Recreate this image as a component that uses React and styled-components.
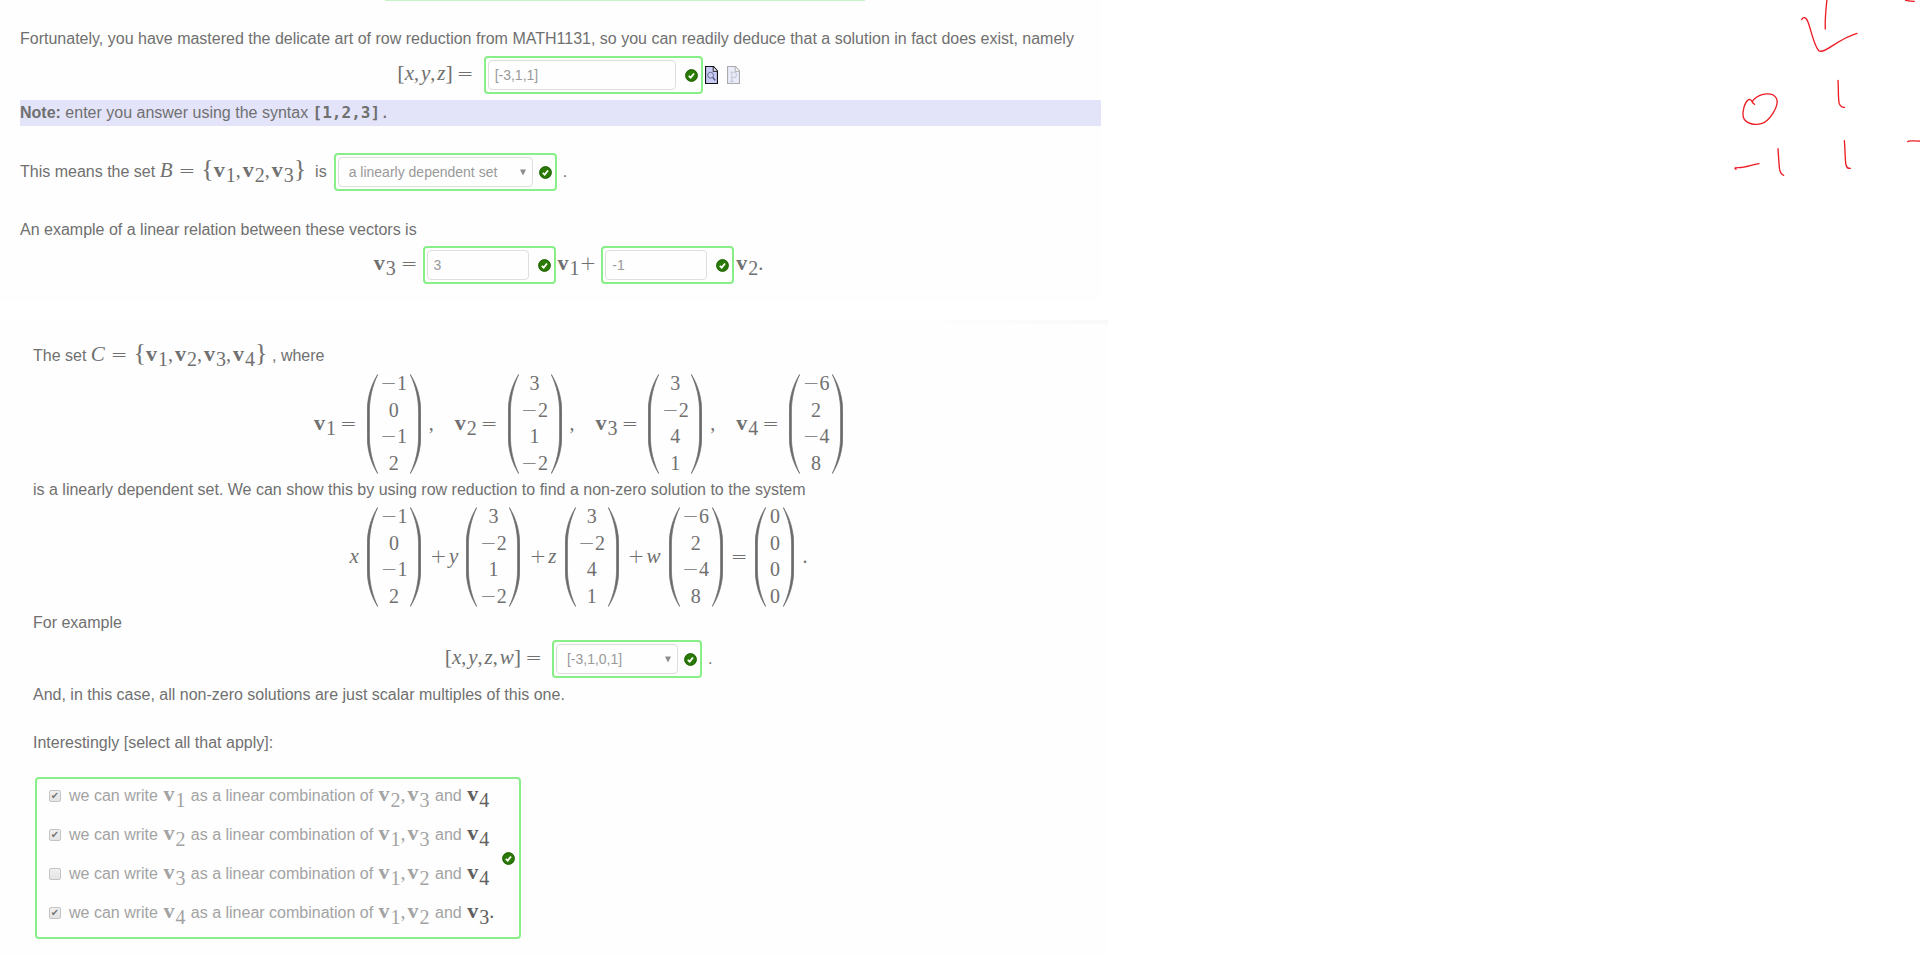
import React from "react";
import styled, { createGlobalStyle } from "styled-components";

const GlobalStyle = createGlobalStyle`
  * { box-sizing: border-box; }
  body {
    margin: 0;
    background: #fff;
    color: #707070;
    font: 16px/24px "Liberation Sans", Arial, sans-serif;
  }
`;

const Page = styled.div`
  display: flex;
  align-items: flex-start;
  justify-content: space-between;
`;

const Quiz = styled.main`
  flex: 0 1 1108px;
  min-width: 0;
`;

const PreviousAnswerEdge = styled.div`
  width: 480px;
  height: 1px;
  margin-left: 365px;
  background: #c4f5c4;
`;

const RelationPart = styled.section`
  margin-right: 7px;
  padding: 0 0 17px 20px;
  background: #fefefe;
`;

const SystemPart = styled.section`
  margin-top: 19px;
  padding: 22px 0 16px 33px;
  background: linear-gradient(to left, #f9f9f9, #fefefe 200px) 0 0 / 100% 4px no-repeat #fefefe;
`;

const Line = styled.p`
  display: flex;
  align-items: baseline;
  margin: ${(p) => p.$before || 0}px 0 0;
  white-space: pre;
`;

const MathText = styled.span`
  font: 20px/24px "Liberation Serif", "Times New Roman", serif;
  white-space: pre;
  margin: 0 ${(p) => p.$right || 0}px 0 ${(p) => p.$left || 0}px;
`;

const Equation = styled.div`
  display: flex;
  justify-content: center;
  align-items: ${(p) => (p.$tall ? "center" : "baseline")};
  margin-top: ${(p) => p.$before || 5}px;
  padding-left: 16px;
  ${MathText} {
    padding-bottom: ${(p) => (p.$tall ? 2 : 0)}px;
  }
`;

const Note = styled.p`
  margin: 6px 0 0;
  line-height: 26px;
  background: #e3e4f9;
`;

const Code = styled.code`
  font: 16px "DejaVu Sans Mono", monospace;
`;

const Variable = styled.i`
  font-size: 21px;
  line-height: 0;
`;

const Operator = styled.span`
  font: 200 20px/0 "DejaVu Sans Light", "DejaVu Sans", sans-serif;
  margin: 0 ${(p) => p.$sides}px;
`;

const Comma = styled.span`
  margin-right: 2px;
`;

const Fence = styled.span`
  font-size: ${(p) => p.$size || 22}px;
  line-height: 0;
`;

const VectorName = styled.b`
  margin-right: 1px;
  font-size: 22px;
  line-height: 0;
`;

const Index = styled.span`
  line-height: 0;
  vertical-align: ${(p) => (p.$low ? -6 : -5)}px;
`;

const Vector = ({ n, low }) => (
  <>
    <VectorName>v</VectorName>
    <Index $low={low}>{n}</Index>
  </>
);

const MatrixBox = styled.span`
  display: flex;
  height: 100px;
`;

const Entries = styled.span`
  display: flex;
  flex-direction: column;
  justify-content: space-between;
  align-items: center;
  width: ${(p) => (p.$narrow ? 17 : 32)}px;
  padding-bottom: 2px;
  font: 20px/18px "Liberation Serif", "Times New Roman", serif;
`;

const Entry = styled.span`
  white-space: nowrap;
`;

const Paren = ({ right }) => (
  <svg width="11" height="100" viewBox="0 0 11 100" aria-hidden="true">
    <path
      d={
        right
          ? "M0.3 0.5C7 11 10.8 24 10.8 38V62C10.8 76 7 89 0.3 99.5C5.6 88 8.6 76 8.6 62V38C8.6 24 5.6 12 0.3 0.5Z"
          : "M10.7 0.5C4 11 0.2 24 0.2 38V62C0.2 76 4 89 10.7 99.5C5.4 88 2.4 76 2.4 62V38C2.4 24 5.4 12 10.7 0.5Z"
      }
      fill="#6b6b6b"
      stroke="#6b6b6b"
      strokeWidth="0.7"
    />
  </svg>
);

const Matrix = ({ values }) => (
  <MatrixBox>
    <Paren />
    <Entries $narrow={values.every((v) => v === 0)}>
      {values.map((v, i) => (
        <Entry key={i}>
          {v < 0 && <Operator $sides={0}>−</Operator>}
          {Math.abs(v)}
        </Entry>
      ))}
    </Entries>
    <Paren right />
  </MatrixBox>
);

const AnswerBox = styled.span`
  display: flex;
  align-items: center;
  height: 38px;
  padding: 0 3px 0 2px;
  border: 2px solid #88ee88;
  border-radius: 4px;
  margin: 0 ${(p) => p.$right || 0}px 0 ${(p) => p.$left || 0}px;
`;

const TextAnswer = styled.input`
  width: ${(p) => p.$width}px;
  height: 30px;
  margin-right: 9px;
  padding: 0 6px;
  border: 1px solid #dedede;
  border-radius: 4px;
  background: #fefefe;
  color: #999;
  font: 14px "Liberation Sans", Arial, sans-serif;
`;

const SelectWrap = styled.span`
  display: grid;
  align-items: center;
  margin-right: 6px;
`;

const ChoiceAnswer = styled.select`
  grid-area: 1 / 1;
  width: ${(p) => p.$width}px;
  height: 30px;
  padding: 0 10px;
  border: 1px solid #dedede;
  border-radius: 4px;
  background: #fefefe;
  color: #999;
  opacity: 1;
  appearance: none;
  font: 14px "Liberation Sans", Arial, sans-serif;
`;

const Caret = styled.svg`
  grid-area: 1 / 1;
  justify-self: end;
  margin-right: 7px;
  pointer-events: none;
`;

const Choice = ({ label, value, width }) => (
  <SelectWrap>
    <ChoiceAnswer aria-label={label} $width={width} disabled defaultValue={value}>
      <option>{value}</option>
    </ChoiceAnswer>
    <Caret width="6" height="7" viewBox="0 0 6 7" aria-hidden="true">
      <path d="M0 0.5H6L3 6.5Z" fill="#8c8c8c" />
    </Caret>
  </SelectWrap>
);

const TickSvg = styled.svg`
  flex: none;
`;

const CorrectTick = () => (
  <TickSvg width="13" height="13" viewBox="0 0 13 13" role="img" aria-label="Correct">
    <circle cx="6.5" cy="6.5" r="6.2" fill="#2a7a06" />
    <circle cx="6.5" cy="6.5" r="5.8" fill="none" stroke="#1d5c04" strokeWidth="0.8" />
    <path d="M3.8 6.8L5.7 8.6L9 4.5" fill="none" stroke="#fff" strokeWidth="1.8" />
  </TickSvg>
);

const ToolButton = styled.button`
  display: flex;
  align-self: center;
  margin: 0 0 0 ${(p) => p.$left}px;
  padding: 0;
  border: 0;
  background: none;
  &:disabled { opacity: 0.35; }
`;

const PageOutline = ({ children }) => (
  <svg width="13" height="18" viewBox="0 0 13 18" aria-hidden="true">
    <path d="M0.5 0.5H8.5L12.5 5V17.5H0.5Z" fill="#c9cbf5" stroke="#111" strokeWidth="1.2" />
    <path d="M8.2 0.8V5.4H12.4" fill="#e8e8fb" stroke="#111" strokeWidth="0.9" />
    {children}
  </svg>
);

const Options = styled.fieldset`
  display: flex;
  align-items: center;
  width: 486px;
  margin: 22px 0 0 2px;
  padding: 0 4px 0 12px;
  border: 2px solid #88ee88;
  border-radius: 4px;
`;

const OptionList = styled.div`
  display: flex;
  flex-direction: column;
  gap: 15px;
  flex: 1;
  padding: 3px 0 14px;
`;

const Option = styled.label`
  display: flex;
  height: 24px;
  color: #a3a3a3;
  white-space: pre;
  align-items: baseline;
`;

const Tickbox = styled.input`
  appearance: none;
  align-self: center;
  flex: none;
  display: grid;
  place-items: center;
  width: 12px;
  height: 12px;
  margin: 3px 8px 0 0;
  border: 1px solid #c4c4c4;
  border-radius: 2px;
  background: linear-gradient(#f0f0f0, #e4e4e4);
  &:checked::after {
    content: "✔";
    color: #777;
    font: 10px/10px "DejaVu Sans", sans-serif;
  }
`;

const LastTerm = styled.span`
  color: #5f5f5f;
`;

const Scribble = styled.svg`
  flex: none;
`;

const Strokes = styled.g`
  fill: none;
  stroke: #ed1c24;
  stroke-width: 4;
  stroke-linecap: round;
  stroke-linejoin: round;
`;

const VECTORS = [
  [-1, 0, -1, 2],
  [3, -2, 1, -2],
  [3, -2, 4, 1],
  [-6, 2, -4, 8],
];

const STATEMENTS = [
  { subject: 1, others: [2, 3], last: 4, checked: true },
  { subject: 2, others: [1, 3], last: 4, checked: true },
  { subject: 3, others: [1, 2], last: 4, checked: false },
  { subject: 4, others: [1, 2], last: 3, checked: true },
];

const Definition = styled.span`
  display: flex;
  align-items: center;
  margin-left: ${(p) => (p.$first ? 0 : 21)}px;
`;

const Listed = ({ items, render }) =>
  items.map((item, i) => (
    <React.Fragment key={item}>
      {i > 0 && <Comma>,</Comma>}
      {render(item)}
    </React.Fragment>
  ));

const Unknowns = ({ names }) => (
  <MathText>
    <Fence>[</Fence>
    <Listed items={names} render={(name) => <Variable>{name}</Variable>} />
    <Fence>]</Fence>
    <Operator $sides={4}>=</Operator>
  </MathText>
);

const VectorSet = ({ name, members }) => (
  <MathText>
    <Variable>{name}</Variable>
    <Operator $sides={6}>=</Operator>
    <Fence $size={26}>{"{"}</Fence>
    <Listed items={members} render={(n) => <Vector n={n} />} />
    <Fence $size={26}>{"}"}</Fence>
  </MathText>
);

export default function App() {
  return (
    <>
      <GlobalStyle />
      <Page>
        <Quiz>
          <RelationPart>
            <PreviousAnswerEdge />
            <Line $before={26}>
              Fortunately, you have mastered the delicate art of row reduction from MATH1131, so you can readily deduce that a solution in fact does exist, namely
            </Line>
            <Equation>
              <Unknowns names={["x", "y", "z"]} />
              <AnswerBox $left={6}>
                <TextAnswer $width={188} aria-label="Value of [x,y,z]" defaultValue="[-3,1,1]" readOnly />
                <CorrectTick />
              </AnswerBox>
              <ToolButton $left={2} type="button" aria-label="Preview answer">
                <PageOutline>
                  <circle cx="5.6" cy="9.2" r="2.9" fill="none" stroke="#6a6f96" strokeWidth="1" />
                  <path d="M7.8 11.4L10.2 14.4" fill="none" stroke="#4a4e74" strokeWidth="1.4" />
                </PageOutline>
              </ToolButton>
              <ToolButton $left={9} type="button" aria-label="Plot answer" disabled>
                <PageOutline>
                  <path d="M4.8 15.4V6.2M3 6.2H6.6C10.4 6.2 10.4 11.6 6.6 11.6H4.8M3 15.4H6.8" fill="none" stroke="#6a6f96" strokeWidth="1.1" />
                </PageOutline>
              </ToolButton>
            </Equation>
            <Note>
              <b>Note:</b> enter you answer using the syntax <Code><b>[1,2,3]</b>.</Code>
            </Note>
            <Line $before={27}>
              {"This means the set "}
              <VectorSet name="B" members={[1, 2, 3]} />
              {"  is"}
              <AnswerBox $left={7} $right={6}>
                <Choice label="Dependence of the set B" value="a linearly dependent set" width={195} />
                <CorrectTick />
              </AnswerBox>
              .
            </Line>
            <Line $before={27}>An example of a linear relation between these vectors is</Line>
            <Equation $before={4}>
              <MathText><Vector n={3} /><Operator $sides={5}>=</Operator></MathText>
              <AnswerBox $right={2}>
                <TextAnswer $width={102} aria-label="Coefficient of v1" defaultValue="3" readOnly />
                <CorrectTick />
              </AnswerBox>
              <MathText><Vector n={1} /><Operator $sides={0}>+</Operator></MathText>
              <AnswerBox $left={5} $right={2}>
                <TextAnswer $width={102} aria-label="Coefficient of v2" defaultValue="-1" readOnly />
                <CorrectTick />
              </AnswerBox>
              <MathText><Vector n={2} />.</MathText>
            </Equation>
          </RelationPart>

          <SystemPart>
            <Line>
              {"The set "}
              <VectorSet name="C" members={[1, 2, 3, 4]} />
              {" , where"}
            </Line>
            <Equation $tall $before={6}>
              {VECTORS.map((values, i) => (
                <Definition key={i} $first={i === 0}>
                  <MathText $right={6}><Vector n={i + 1} /><Operator $sides={4}>=</Operator></MathText>
                  <Matrix values={values} />
                  {i < 3 && <MathText $left={8}>,</MathText>}
                </Definition>
              ))}
            </Equation>
            <Line $before={4}>
              is a linearly dependent set. We can show this by using row reduction to find a non-zero solution to the system
            </Line>
            <Equation $tall>
              {["x", "y", "z", "w"].map((name, i) => (
                <React.Fragment key={name}>
                  <MathText $left={i > 0 ? 7 : 0} $right={3}>
                    {i > 0 && <Operator $sides={2}>+</Operator>}
                    <Variable>{name} </Variable>
                  </MathText>
                  <Matrix values={VECTORS[i]} />
                </React.Fragment>
              ))}
              <MathText><Operator $sides={8}>=</Operator></MathText>
              <Matrix values={[0, 0, 0, 0]} />
              <MathText $left={8}>.</MathText>
            </Equation>
            <Line $before={4}>For example</Line>
            <Equation>
              <Unknowns names={["x", "y", "z", "w"]} />
              <AnswerBox $left={6} $right={6}>
                <Choice label="Value of [x,y,z,w]" value="[-3,1,0,1]" width={122} />
                <CorrectTick />
              </AnswerBox>
              .
            </Equation>
            <Line $before={5}>And, in this case, all non-zero solutions are just scalar multiples of this one.</Line>
            <Line $before={24}>Interestingly [select all that apply]:</Line>
            <Options aria-label="Interestingly">
              <OptionList>
                {STATEMENTS.map((s) => (
                  <Option key={s.subject}>
                    <Tickbox type="checkbox" defaultChecked={s.checked} disabled />
                    {"we can write "}
                    <MathText $left={1} $right={1}><Vector n={s.subject} low /></MathText>
                    {" as a linear combination of "}
                    <MathText $left={1} $right={1}>
                      <Listed items={s.others} render={(n) => <Vector n={n} low />} />
                    </MathText>
                    {" and "}
                    <LastTerm>
                      <MathText $left={1}><Vector n={s.last} low />{s.last === 3 && "."}</MathText>
                    </LastTerm>
                  </Option>
                ))}
              </OptionList>
              <CorrectTick />
            </Options>
          </SystemPart>
        </Quiz>

        <Scribble width="240" height="200" viewBox="0 0 720 600" role="img" aria-label="Handwritten working">
          <Strokes>
            <path d="M441 -4C438 30 434 58 436 87" />
            <path d="M365 59C368 50 378 50 384 66C394 92 402 138 417 153C436 162 470 118 531 100" />
            <path d="M677 1C686 3 694 4 703 4" />
            <path d="M474 241C476 270 474 300 478 311C482 320 486 323 494 322" />
            <path d="M224 313C214 309 217 302 223 297C242 278 280 275 290 296C298 318 268 364 244 371C222 377 196 370 190 352C186 334 194 308 204 300C210 296 214 300 217 307" />
            <path d="M168 508C162 503 166 503 176 503C198 503 214 494 237 491" />
            <path d="M294 446C296 474 297 498 299 509C301 518 304 523 311 526" />
            <path d="M493 422C496 452 495 484 498 495C500 503 504 506 511 505" />
            <path d="M683 425C686 420 700 424 724 423" />
          </Strokes>
        </Scribble>
      </Page>
    </>
  );
}
